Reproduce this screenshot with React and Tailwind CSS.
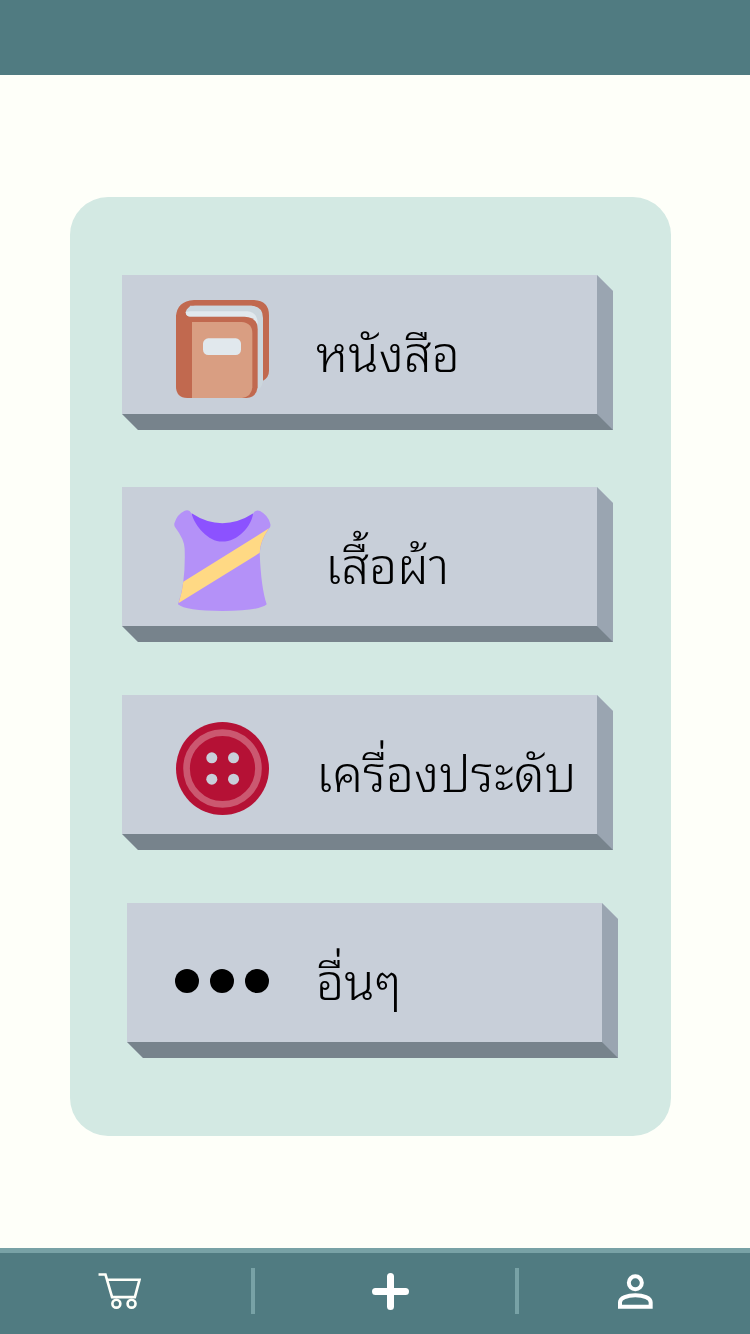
function BookIcon() {
  return (
    <svg viewBox="198 104 279 294" className="h-[98px] w-[93px]" aria-hidden="true">
      <path d="M198 154 Q200 108 252 104 H432 Q477 106 477 150 V316 Q477 336 459 346 V180 L425 121 H240 L228 150 L198 200Z" fill="#c1694f" />
      <path d="M198 148 H460 V180 H198Z" fill="#c1694f" />
      <path d="M255 121 H424 Q459 123 459 158 V346 Q458 362 443 376 L400 155 H240 Q227 152 227 140 Q231 122 255 121Z" fill="#ccd6dd" />
      <path d="M240 138 H412 Q443 140 443 176 L400 154 H240 Q228 153 227 140Z" fill="#e1e8ed" />
      <path d="M198 154 H404 Q443 156 443 192 V366 Q439 396 410 398 H232 Q198 396 198 364Z" fill="#c1694f" />
      <path d="M246 170 H394 Q427 172 427 204 V366 Q425 394 396 398 H246Z" fill="#d99e82" />
      <rect x="279" y="219" width="114" height="50" rx="16" fill="#e1e8ed" />
    </svg>
  );
}

function ShirtIcon() {
  return (
    <svg viewBox="192 92 290 304" className="h-[101px] w-[97px]" aria-hidden="true">
      <path d="M244 102 Q336 162 430 102 L424 180 L336 200 L250 180Z" fill="#8c52ff" />
      <path d="M244 103 Q236 88 222 95 Q199 106 192 133 Q191 140 195 145 Q222 181 223 208 Q225 262 219 308 Q215 343 203 376 Q226 396 337 396 Q450 395 470 376 Q453 326 449 222 Q450 187 477 148 Q483 142 481 134 Q475 108 450 95 Q437 89 429 103 C424 140 384 187 336 187 C294 187 254 140 244 103Z" fill="#b491f8" />
      <path d="M219 308 L477 147 Q449 188 449 221 L205 372 Q216 340 219 308Z" fill="#ffd984" />
    </svg>
  );
}

function ButtonIcon() {
  return (
    <svg viewBox="197 98 278 278" className="size-[93px]" aria-hidden="true">
      <circle cx="336" cy="237" r="139" fill="#b51135" />
      <circle cx="336" cy="237" r="107.500" fill="none" stroke="#cb5870" strokeWidth="20" />
      <g fill="#c8cfd9">
        <circle cx="304" cy="205" r="16.500" />
        <circle cx="369" cy="205" r="16.500" />
        <circle cx="304" cy="269" r="16.500" />
        <circle cx="369" cy="269" r="16.500" />
      </g>
    </svg>
  );
}

function DotsIcon() {
  return (
    <svg viewBox="0 0 94 24" className="h-[24px] w-[94px]" aria-hidden="true">
      <circle cx="12" cy="12" r="12" />
      <circle cx="47" cy="12" r="12" />
      <circle cx="82" cy="12" r="12" />
    </svg>
  );
}

const categories = [
  { label: "หนังสือ", Icon: BookIcon, place: "mr-[5px]", inset: "pl-[51px]", iconPad: "pt-[8px]", gap: "ml-[45px]" },
  { label: "เสื้อผ้า", Icon: ShirtIcon, place: "mt-[57px] mr-[5px]", inset: "pl-[51px]", iconPad: "pt-[8px]", gap: "ml-[54px]" },
  { label: "เครื่องประดับ", Icon: ButtonIcon, place: "mt-[53px] mr-[5px]", inset: "pl-[51px]", iconPad: "pt-[8px]", gap: "ml-[45px]" },
  { label: "อื่นๆ", Icon: DotsIcon, place: "mt-[53px] ml-[5px]", inset: "pl-[46px]", iconPad: "pt-[16px]", gap: "ml-[45px]" },
];

function CategoryCard({ label, Icon, place, inset, iconPad, gap }) {
  return (
    <button
      type="button"
      className={`flex h-[155px] items-center border-r-[16px] border-b-[16px] border-r-[#9aa5b1] border-b-[#77838c] bg-[#c8cfd9] text-left [clip-path:polygon(0_0,calc(100%-16px)_0,100%_16px,100%_100%,16px_100%,0_calc(100%-16px))] ${place} ${inset}`}
    >
      <span className={`flex w-[98px] shrink-0 items-center justify-center ${iconPad}`}>
        <Icon />
      </span>
      <span className={`pt-[10px] text-[50px] leading-[80px] font-light whitespace-nowrap text-black ${gap}`}>{label}</span>
    </button>
  );
}

function Divider() {
  return <span className="h-[46px] w-[4px] shrink-0 bg-[#78a2a6]" />;
}

export default function App() {
  return (
    <div className="flex min-h-screen flex-col bg-[#fefff9] font-['Noto_Sans_Thai_Looped','Noto_Sans_Thai','Loma','Noto_Sans',sans-serif]">
      <header className="h-[75px] shrink-0 bg-[#507b81]" />
      <main className="flex-1 pt-[122px] pr-[79px] pb-[112px] pl-[70px]">
        <div className="flex flex-col rounded-[38px] bg-[#d3e9e3] pt-[78px] pr-[53px] pb-[78px] pl-[52px]">
          {categories.map((c) => (
            <CategoryCard key={c.label} {...c} />
          ))}
        </div>
      </main>
      <nav className="flex h-[86px] shrink-0 items-center border-t-[5px] border-[#78a2a6] bg-[#507b81] pb-[5px]">
        <a href="#cart" aria-label="ตะกร้า" className="flex flex-[251] justify-center">
          <svg viewBox="113 130 129 109" className="mr-[12px] h-[36px] w-[43px]" fill="none" stroke="#fefff9" strokeWidth="8" aria-hidden="true">
            <path d="M114 134.500 H135 L155 203 H224 L238 150.500 H141" />
            <circle cx="168" cy="223" r="12" />
            <circle cx="214" cy="223" r="12" />
          </svg>
        </a>
        <Divider />
        <a href="#add" aria-label="เพิ่ม" className="flex flex-[260] justify-center">
          <svg viewBox="0 0 37 37" className="ml-[10px] size-[37px]" stroke="#ffffff" strokeWidth="7" strokeLinecap="round" aria-hidden="true">
            <path d="M18.500 3.500 V33.500 M3.500 18.500 H33.500" />
          </svg>
        </a>
        <Divider />
        <a href="#profile" aria-label="โปรไฟล์" className="flex flex-[231] justify-center">
          <svg viewBox="175 132 105 105" className="ml-[2px] size-[35px]" fill="none" stroke="#ffffff" strokeWidth="12" aria-hidden="true">
            <circle cx="227" cy="158.500" r="19.500" />
            <path d="M181 230 V217 C181 203 203 196 227 196 C251 196 273 203 273 217 V230Z" />
          </svg>
        </a>
      </nav>
    </div>
  );
}
